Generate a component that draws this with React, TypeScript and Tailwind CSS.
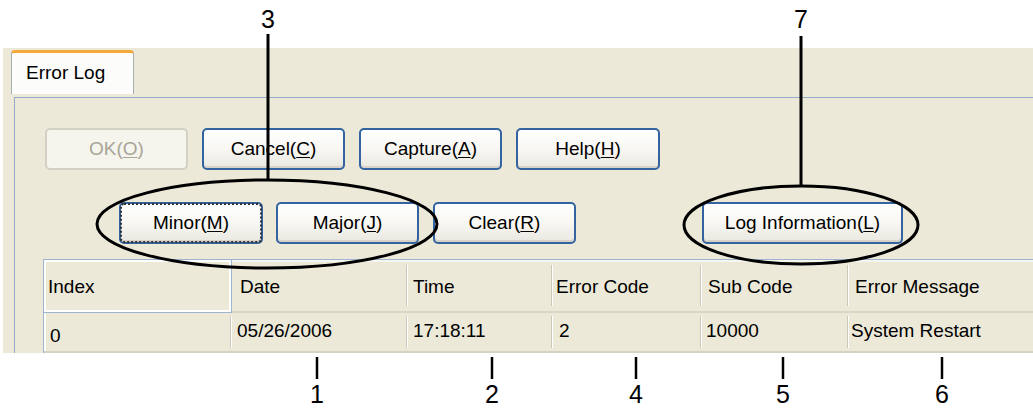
import React from "react";

const font = { fontFamily: '"Liberation Sans", Arial, sans-serif' };

type BtnProps = {
  pre: string;
  hot: string;
  post: string;
  w: string;
  disabled?: boolean;
  focused?: boolean;
};

function XpButton({ pre, hot, post, w, disabled, focused }: BtnProps) {
  if (disabled) {
    return (
      <div
        className={`${w} h-[42px] shrink-0 rounded-[5px] border-2 border-[#d3d1c5] bg-[#f5f4ed] text-[#a9a697] text-[19px] flex items-center justify-center`}
      >
        {pre}
        <span className="underline underline-offset-2">{hot}</span>
        {post}
      </div>
    );
  }
  return (
    <div
      className={`${w} h-[42px] shrink-0 rounded-[5px] border-2 border-[#3464a0] bg-linear-to-b from-white via-[#f8f7f3] to-[#e9e7e0] shadow-[inset_0_-2px_0_#d8d3c8] text-black text-[19px] flex items-center justify-center ${
        focused ? "outline-2 outline-dotted outline-[#333] -outline-offset-3" : ""
      }`}
    >
      {pre}
      <span className="underline underline-offset-2">{hot}</span>
      {post}
    </div>
  );
}

const columns = [
  { name: "Date", w: "w-[176px]", value: "05/26/2006", hp: "pl-[8px]", dp: "pl-[5px]" },
  { name: "Time", w: "w-[145px]", value: "17:18:11", hp: "pl-[5px]", dp: "pl-[5px]" },
  { name: "Error Code", w: "w-[149px]", value: "2", hp: "pl-[3px]", dp: "pl-[6px]" },
  { name: "Sub Code", w: "w-[147px]", value: "10000", hp: "pl-[6px]", dp: "pl-[4px]" },
  { name: "Error Message", w: "w-[260px]", value: "System Restart", hp: "pl-[6px]", dp: "pl-[2px]" },
];

function Annotations() {
  const ticks = [
    { x: 317, n: "1" },
    { x: 492, n: "2" },
    { x: 636, n: "4" },
    { x: 783, n: "5" },
    { x: 942, n: "6" },
  ];
  return (
    <svg
      className="absolute inset-0 pointer-events-none"
      width="1033"
      height="410"
      viewBox="0 0 1033 410"
    >
      <g fill="none" stroke="#000" strokeWidth="3">
        <line x1="268" y1="34" x2="268" y2="181" />
        <ellipse cx="267" cy="224" rx="170" ry="44" />
        <line x1="801" y1="36" x2="801" y2="187" />
        <ellipse cx="801" cy="225" rx="117" ry="39" />
        {ticks.map((t) => (
          <line key={t.n} x1={t.x} y1="357" x2={t.x} y2="379" strokeWidth="2.5" />
        ))}
      </g>
      <g fill="#000" fontSize="25" textAnchor="middle" style={font}>
        <text x="268" y="28">3</text>
        <text x="801" y="28">7</text>
        {ticks.map((t) => (
          <text key={t.n} x={t.x} y="403">
            {t.n}
          </text>
        ))}
      </g>
    </svg>
  );
}

export default function App() {
  return (
    <div className="relative w-[1033px] h-[410px] bg-white overflow-hidden" style={font}>
      <div className="flex flex-col">
        <div className="h-[48px]" />
        <div className="h-[305px] ml-[3px] bg-[#ece9d8] overflow-hidden flex flex-col pt-[2px]">
          {/* tab */}
          <div className="ml-[8px] w-[123px] h-[46px] rounded-t-[4px] border-t-[3px] border-[#f5a93b] bg-[#fcfcfb] border-x border-x-[#a6aeae] flex items-center pl-[14px] text-[19px] text-black">
            Error Log
          </div>

          {/* panel */}
          <div className="mt-[3px] ml-[11px] flex-1 border-l border-t border-[#93acca] flex flex-col">
            <div className="flex gap-[14px] pl-[30px] pt-[30px]">
              <XpButton pre="OK(" hot="O" post=")" w="w-[143px]" disabled />
              <XpButton pre="Cancel(" hot="C" post=")" w="w-[143px]" />
              <XpButton pre="Capture(" hot="A" post=")" w="w-[143px]" />
              <XpButton pre="Help(" hot="H" post=")" w="w-[144px]" />
            </div>

            <div className="flex pl-[104px] mt-[32px]">
              <XpButton pre="Minor(" hot="M" post=")" w="w-[144px]" focused />
              <div className="w-[13px]" />
              <XpButton pre="Major(" hot="J" post=")" w="w-[143px]" />
              <div className="w-[14px]" />
              <XpButton pre="Clear(" hot="R" post=")" w="w-[143px]" />
              <div className="w-[126px]" />
              <XpButton pre="Log Information(" hot="L" post=")" w="w-[201px]" />
            </div>

            {/* table */}
            <div className="mt-[15px] ml-[28px] border-l border-t border-[#9db3cf] flex flex-col text-[19px] text-black">
              <div className="flex h-[53px]">
                <div className="w-[188px] shrink-0 border-r border-b border-[#9db3cf] shadow-[inset_0_0_0_2px_#ffffff] flex items-center pl-[4px] pt-[3px]">
                  Index
                </div>
                {columns.map((c) => (
                  <div
                    key={c.name}
                    className={`${c.w} shrink-0 flex border-b-2 border-[#d9d5c8] shadow-[inset_0_2px_0_#f6f5ef]`}
                  >
                    <div className={`flex-1 flex items-center pt-[4px] ${c.hp}`}>{c.name}</div>
                    <div className="my-[5px] w-[2px] border-l border-[#cbc7b9] bg-white" />
                  </div>
                ))}
              </div>
              <div className="flex h-[40px]">
                <div className="w-[188px] shrink-0 flex border-b-2 border-[#d6d2c5] shadow-[inset_2px_0_0_#ffffff]">
                  <div className="flex-1 pl-[6px] pt-[9px]">0</div>
                  <div className="my-[3px] w-[2px] border-l border-[#cbc7b9] bg-white" />
                </div>
                {columns.map((c) => (
                  <div
                    key={c.name}
                    className={`${c.w} shrink-0 flex border-b-2 border-[#d6d2c5]`}
                  >
                    <div className={`flex-1 pt-[4px] ${c.dp}`}>{c.value}</div>
                    <div className="my-[3px] w-[2px] border-l border-[#cbc7b9] bg-white" />
                  </div>
                ))}
              </div>
            </div>
          </div>
        </div>
      </div>
      <Annotations />
    </div>
  );
}
